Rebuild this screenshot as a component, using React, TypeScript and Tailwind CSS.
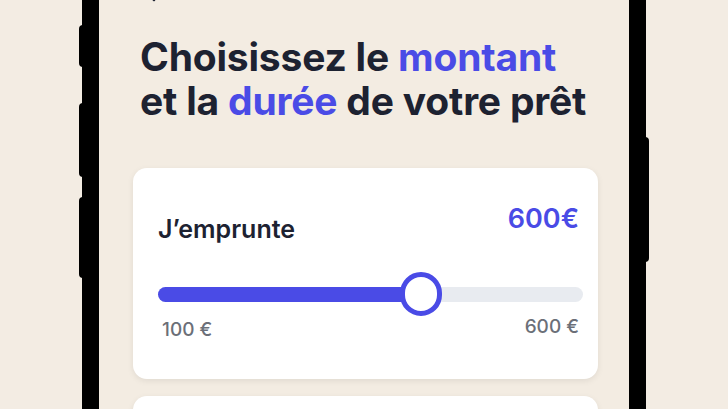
import React from 'react';

const value = 600;
const min = 100;
const max = 600;
// thumb position as shown in the screenshot
const pct = 61.8;

const App: React.FC = () => {
  return (
    <div
      className="min-h-screen h-[409px] overflow-hidden flex justify-center bg-[#f3ece3]"
      style={{ fontFamily: 'Inter, "Noto Sans", sans-serif' }}
    >
      {/* Phone */}
      <div className="relative w-[564px] h-full border-x-[17px] border-black bg-[#f3ece2]">
        {/* side buttons */}
        <div className="absolute -left-[20px] top-[25px] w-[4px] h-[42px] rounded-l-sm bg-black" />
        <div className="absolute -left-[20px] top-[103px] w-[4px] h-[74px] rounded-l-sm bg-black" />
        <div className="absolute -left-[20px] top-[197px] w-[4px] h-[81px] rounded-l-sm bg-black" />
        <div className="absolute -right-[20px] top-[137px] w-[4px] h-[125px] rounded-r-sm bg-black" />

        <div className="pl-[34px] pr-[31px]">
          {/* back arrow, mostly scrolled off */}
          <div className="h-[20px] -mt-[17px] pl-[12px]">
            <svg width="18" height="20" viewBox="0 0 18 20" fill="none">
              <path d="M9 3 L3 10 L9 17" stroke="#1d2231" strokeWidth="2.5" strokeLinecap="round" strokeLinejoin="round" />
            </svg>
          </div>

          {/* Heading */}
          <h1 className="mt-[32px] pl-[7px] text-[39px] leading-[44px] font-bold tracking-[-0.005em] text-[#1d2231]">
            Choisissez le <span className="text-[#4a4be6]">montant</span>
            <br />
            et la <span className="text-[#4a4be6]">durée</span> de votre prêt
          </h1>

          {/* Amount card */}
          <div className="mt-[45px] rounded-[14px] bg-white pl-[25px] pr-[15px] pt-[37px] pb-[40px] shadow-[0_2px_6px_rgba(0,0,0,0.08)]">
            <div className="flex items-start justify-between">
              <span className="mt-[12px] text-[25px] leading-[25px] font-semibold text-[#1d2231]">J’emprunte</span>
              <span className="mr-[4px] text-[27px] leading-[27px] font-semibold text-[#4a4be6]">{value}€</span>
            </div>

            <div className="mt-[29px] h-[46px] flex items-center">
              <div className="w-full h-[15px] flex items-center rounded-full bg-[#e8ebf0]">
                <div className="h-full rounded-l-full bg-[#4a4be6]" style={{ width: `${pct}%` }} />
                <div className="shrink-0 -ml-[21px] w-[42px] h-[44px] rounded-full border-[5px] border-[#4a4be6] bg-white" />
              </div>
            </div>

            <div className="mt-[3px] flex items-start justify-between text-[19px] leading-[19px] font-medium text-[#6b6f78]">
              <span className="ml-[4px]">{min} €</span>
              <span className="mr-[4px] -mt-[3px]">{max} €</span>
            </div>
          </div>

          {/* next card, cut off by the viewport */}
          <div className="mt-[17px] h-[120px] rounded-[14px] bg-white shadow-[0_2px_6px_rgba(0,0,0,0.08)]" />
        </div>
      </div>
    </div>
  );
};

export default App;
